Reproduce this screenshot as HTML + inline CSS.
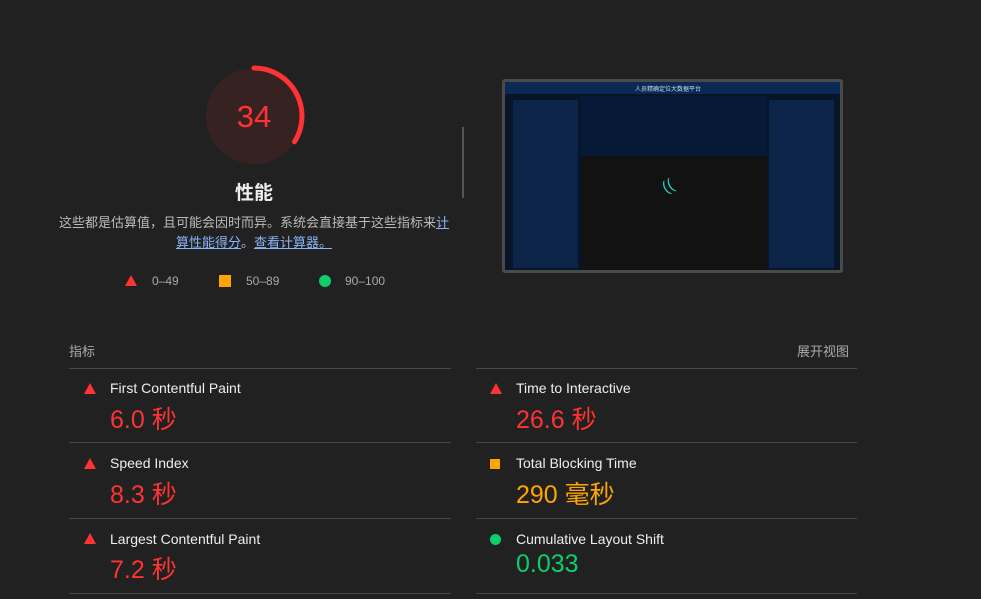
<!DOCTYPE html><html><head><meta charset="utf-8"><style>
body{margin:0;width:981px;height:599px;background:#212121;font-family:"Liberation Sans","Noto Sans CJK SC",sans-serif;position:relative;overflow:hidden;color:#e8e8e8}
.a{position:absolute}
.line{position:absolute;height:1px;background:#474747}
.t{position:absolute;font-size:14px;color:#eee;white-space:nowrap}
.v{position:absolute;font-size:25px;white-space:nowrap}
.tri{position:absolute;width:0;height:0;border-left:6px solid transparent;border-right:6px solid transparent;border-bottom:11px solid #ff3333}
.r{color:#ff3333}.o{color:#ffa400}.g{color:#0cce6b}
a{color:#8ab4f8;text-decoration:underline}
</style></head><body>
<svg class="a" style="left:202px;top:64px" width="104" height="104" viewBox="0 0 104 104">
<circle cx="52" cy="52" r="48" fill="#372222"/>
<circle cx="52" cy="52" r="48" fill="none" stroke="#ff3333" stroke-width="5" stroke-linecap="round" stroke-dasharray="102.5 400" transform="rotate(-90 52 52)"/>
<text x="52" y="63" text-anchor="middle" font-size="31" fill="#ff3333" font-family="Liberation Sans,sans-serif">34</text>
</svg>
<div class="a" style="left:204px;top:178px;width:100px;text-align:center;font-size:19px;font-weight:bold;color:#eee">性能</div>
<div class="a" style="left:58px;top:213px;width:392px;text-align:center;font-size:13px;line-height:20px;color:#bbb">这些都是估算值，且可能会因时而异。系统会直接基于这些指标来<a>计算性能得分</a>。<a>查看计算器。</a></div>
<div class="tri" style="left:125px;top:275px"></div><div class="t" style="left:152px;top:274px;font-size:12px;color:#aaa">0–49</div>
<div class="a" style="left:219px;top:275px;width:12px;height:12px;background:#ffa400"></div><div class="t" style="left:246px;top:274px;font-size:12px;color:#aaa">50–89</div>
<div class="a" style="left:319px;top:275px;width:12px;height:12px;border-radius:50%;background:#0cce6b"></div><div class="t" style="left:345px;top:274px;font-size:12px;color:#aaa">90–100</div>
<div class="a" style="left:462px;top:127px;width:2px;height:71px;background:#555"></div>
<div class="a" style="left:502px;top:79px;width:335px;height:188px;border:3px solid #4a4a4a;border-radius:3px;background:#071528;overflow:hidden">
<div class="a" style="left:0;top:0;width:335px;height:12px;background:#0a2a55"></div>
<div class="a" style="left:130px;top:2px;font-size:6px;color:#cde">人员精确定位大数据平台</div>
<div class="a" style="left:8px;top:18px;width:65px;height:168px;background:#0b2448"></div>
<div class="a" style="left:264px;top:18px;width:65px;height:168px;background:#0b2448"></div>
<div class="a" style="left:76px;top:14px;width:186px;height:60px;background:#061a38"></div>
<div class="a" style="left:76px;top:74px;width:186px;height:114px;background:#121212"></div>
<div class="a" style="left:158px;top:96px;font-size:16px;color:#2cc;transform:rotate(-30deg)">((</div>
</div>
<div class="t" style="left:69px;top:341px;font-size:13px;color:#aaa">指标</div>
<div class="t" style="left:797px;top:341px;font-size:13px;color:#aaa">展开视图</div>
<div class="line" style="left:69px;top:368px;width:382px"></div><div class="line" style="left:476px;top:368px;width:381px"></div>
<div class="line" style="left:69px;top:442px;width:382px"></div><div class="line" style="left:476px;top:442px;width:381px"></div>
<div class="line" style="left:69px;top:518px;width:382px"></div><div class="line" style="left:476px;top:518px;width:381px"></div>
<div class="line" style="left:69px;top:593px;width:382px"></div><div class="line" style="left:476px;top:593px;width:381px"></div>
<div class="tri" style="left:84px;top:383px"></div><div class="t" style="left:110px;top:380px">First Contentful Paint</div><div class="v r" style="left:110px;top:400px">6.0 秒</div>
<div class="tri" style="left:84px;top:458px"></div><div class="t" style="left:110px;top:455px">Speed Index</div><div class="v r" style="left:110px;top:475px">8.3 秒</div>
<div class="tri" style="left:84px;top:533px"></div><div class="t" style="left:110px;top:531px">Largest Contentful Paint</div><div class="v r" style="left:110px;top:550px">7.2 秒</div>
<div class="tri" style="left:490px;top:383px"></div><div class="t" style="left:516px;top:380px">Time to Interactive</div><div class="v r" style="left:516px;top:400px">26.6 秒</div>
<div class="a" style="left:490px;top:459px;width:10px;height:10px;background:#ffa400"></div><div class="t" style="left:516px;top:455px">Total Blocking Time</div><div class="v o" style="left:516px;top:475px">290 毫秒</div>
<div class="a" style="left:490px;top:534px;width:11px;height:11px;border-radius:50%;background:#0cce6b"></div><div class="t" style="left:516px;top:531px">Cumulative Layout Shift</div><div class="v g" style="left:516px;top:550px">0.033</div>
</body></html>
